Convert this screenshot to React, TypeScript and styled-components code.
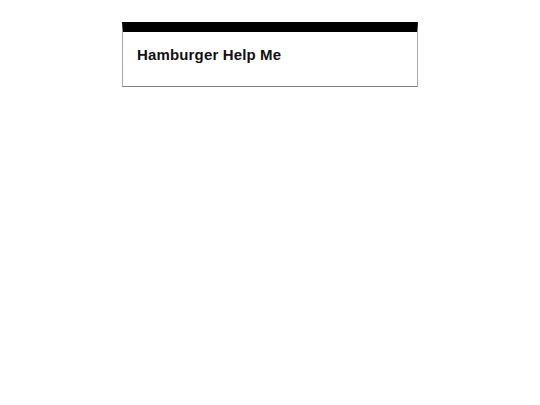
import React from 'react';
import styled, {createGlobalStyle} from "styled-components";

const GlobalStyle = createGlobalStyle`
  body {
    margin: 0;
    background: #FFFFFF;
    font-family: 'Liberation Sans', Arial, sans-serif;
  }
`

export default function App() {
    return (
        <>
            <GlobalStyle/>
            <Page>
                <Card>
                    <Title>Hamburger Help Me</Title>
                </Card>
            </Page>
        </>
    );
}

const Page = styled.div`
  display: flex;
  justify-content: center;
  padding-top: 22px;
`

const Card = styled.div`
  width: 280px;
  padding: 14px 0 23px 14px;
  background: #FFFFFF;
  border: 1px solid #a9a9a9;
  border-top: 10px solid #000000;
  border-bottom-color: #808080;
`

const Title = styled.h2`
  margin: 0;
  font-size: 15px;
  font-weight: 700;
  line-height: 17px;
  letter-spacing: 0.15px;
  color: #111111;
`
